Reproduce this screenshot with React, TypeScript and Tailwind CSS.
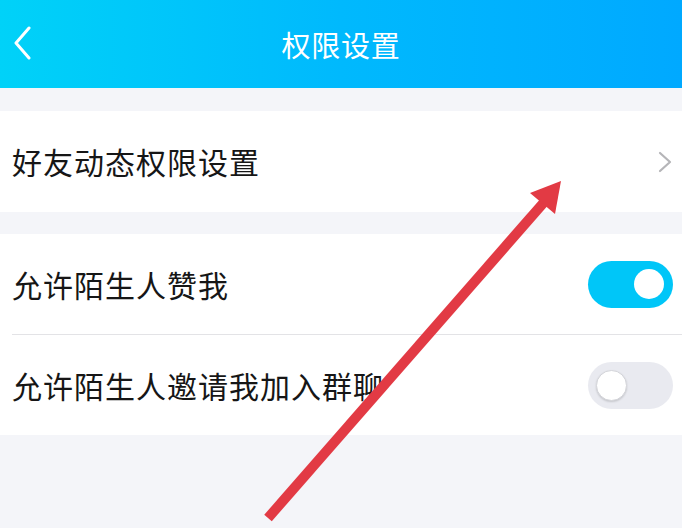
import React from "react";

const font = { fontFamily: '"Noto Sans CJK SC", "Noto Sans", sans-serif' };

function Toggle({ on }: { on: boolean }) {
  return on ? (
    <div className="w-[85px] h-[47px] rounded-full bg-[#00c6f8] flex items-center justify-end pr-[9px]">
      <div className="w-[30px] h-[30px] rounded-full bg-white" />
    </div>
  ) : (
    <div className="w-[85px] h-[47px] rounded-full bg-[#e9eaf0] flex items-center justify-start pl-[8px]">
      <div className="w-[31px] h-[31px] rounded-full bg-white border border-[#d4d5da] shadow-[0_1px_2px_rgba(0,0,0,0.15)]" />
    </div>
  );
}

export default function App() {
  return (
    <div className="relative w-[682px] h-[528px] bg-[#f4f5f9] overflow-hidden" style={font}>
      <div className="h-[88px] bg-gradient-to-r from-[#00d2f8] via-[#00b9fd] to-[#00a9ff] flex items-center relative">
        <svg className="absolute left-[12px] top-[26px]" width="22" height="34" viewBox="0 0 22 34">
          <path d="M17 2 L4 17 L17 32" fill="none" stroke="white" strokeWidth="3" strokeLinecap="round" strokeLinejoin="round" />
        </svg>
        <div className="w-full text-center text-white text-[29px] tracking-[0.8px] leading-none">权限设置</div>
      </div>
      <div className="h-[23px]" />
      <div className="bg-white h-[101px] flex items-center justify-between pl-[12px] pr-[10px]">
        <span className="text-[30px] text-[#161616] tracking-[1px]">好友动态权限设置</span>
        <svg width="14" height="22" viewBox="0 0 14 22">
          <path d="M2 2 L12 11 L2 20" fill="none" stroke="#b5b5b8" strokeWidth="2.2" strokeLinecap="round" strokeLinejoin="round" />
        </svg>
      </div>
      <div className="h-[22px]" />
      <div className="bg-white">
        <div className="h-[100px] flex items-center justify-between pl-[12px] pr-[9px]">
          <span className="text-[30px] text-[#161616] tracking-[1px]">允许陌生人赞我</span>
          <Toggle on />
        </div>
        <div className="ml-[12px] h-px bg-[#e3e3e6]" />
        <div className="h-[100px] flex items-center justify-between pl-[12px] pr-[9px]">
          <span className="text-[30px] text-[#161616] tracking-[1px]">允许陌生人邀请我加入群聊</span>
          <Toggle on={false} />
        </div>
      </div>
      <svg className="absolute left-0 top-0 pointer-events-none" width="682" height="528" viewBox="0 0 682 528">
        <line x1="268" y1="518" x2="546" y2="200" stroke="#e23a44" strokeWidth="10" strokeLinecap="butt" />
        <polygon points="561,181 530,193 555,214" fill="#e23a44" />
      </svg>
    </div>
  );
}
